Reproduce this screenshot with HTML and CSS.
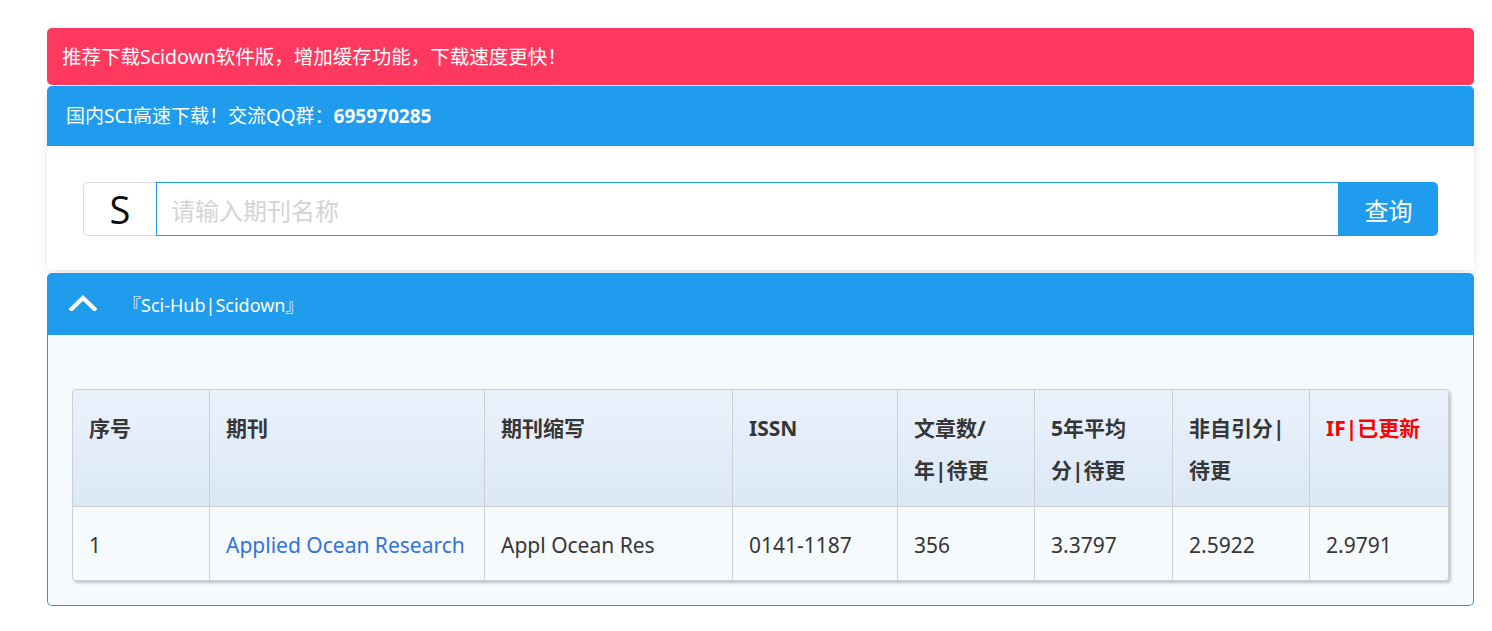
FILE: index.html
```html
<!DOCTYPE html>
<html lang="zh-CN">
<head>
<meta charset="utf-8">
<title>Scidown</title>
<link rel="stylesheet" href="styles.css">
</head>
<body>
<div class="page">
  <div class="notice">推荐下载Scidown软件版，增加缓存功能，下载速度更快！</div>
  <div class="card">
    <div class="card-head">国内SCI高速下载！交流QQ群：<strong>695970285</strong></div>
    <div class="card-body">
      <div class="search">
        <span class="addon">S</span>
        <input class="input" type="text" placeholder="请输入期刊名称">
        <button class="btn">查询</button>
      </div>
    </div>
  </div>
  <div class="panel">
    <div class="panel-head">
      <svg class="chev" width="28" height="16" viewBox="0 0 28 16"><polyline points="2.5,14 14,3 25.5,14" fill="none" stroke="#fff" stroke-width="4.2" stroke-linecap="square"/></svg>
      <span class="panel-title">『Sci-Hub|Scidown』</span>
    </div>
    <div class="panel-body">
      <table class="tbl">
        <colgroup>
          <col class="c1"><col class="c2"><col class="c3"><col class="c4"><col class="c5"><col class="c6"><col class="c7"><col class="c8">
        </colgroup>
        <thead>
          <tr>
            <th>序号</th><th>期刊</th><th>期刊缩写</th><th>ISSN</th><th>文章数/<br>年|待更</th><th>5年平均<br>分|待更</th><th>非自引分|<br>待更</th><th class="red">IF|已更新</th>
          </tr>
        </thead>
        <tbody>
          <tr>
            <td>1</td><td><a href="#">Applied Ocean Research</a></td><td>Appl Ocean Res</td><td>0141-1187</td><td>356</td><td>3.3797</td><td>2.5922</td><td>2.9791</td>
          </tr>
        </tbody>
      </table>
    </div>
  </div>
</div>
</body>
</html>
```

FILE: styles.css
```css
* { box-sizing: border-box; }
html, body { margin: 0; padding: 0; background: #fff; }
body {
  font-family: "Noto Sans", "Noto Sans CJK SC", sans-serif;
  color: #363636;
}
.page {
  padding: 28px 18px 0 47px;
}
.notice {
  background: #ff3860;
  color: #fff;
  font-size: 19.5px;
  height: 57px;
  line-height: 57px;
  padding: 0 15px;
  border-radius: 5px;
  margin-bottom: 1px;
}
.card {
  background: #fff;
  border-radius: 5px 5px 2px 2px;
  box-shadow: 0 6px 14px -2px rgba(10,10,10,0.10), 0 0 0 1px rgba(10,10,10,0.02);
}
.card-head {
  background: #209cee;
  color: #fff;
  height: 60px;
  line-height: 60px;
  padding: 0 19px;
  font-size: 19px;
  border-radius: 5px 5px 0 0;
}
.card-head strong { font-weight: 700; }
.card-body {
  padding: 36px 36px 34px;
}
.search {
  display: flex;
  height: 54px;
}
.addon {
  width: 73px;
  flex: none;
  border: 1px solid #dbdbdb;
  border-right: none;
  border-radius: 5px 0 0 5px;
  display: flex;
  align-items: center;
  justify-content: center;
  font-size: 38px;
  color: #0a0a0a;
  font-family: "Open Sans", "Noto Sans", sans-serif;
}
.input {
  flex: 1;
  min-width: 0;
  height: 54px;
  border: 1px solid #209cee;
  outline: none;
  padding: 0 14px;
  font-size: 24px;
  font-family: "Noto Sans CJK SC", sans-serif;
  color: #363636;
  margin: 0;
}
.input::placeholder { color: #d4d4d4; }
.btn {
  width: 99px;
  flex: none;
  height: 54px;
  margin: 0;
  border: none;
  background: #209cee;
  color: #fff;
  font-size: 24px;
  font-family: "Noto Sans CJK SC", sans-serif;
  border-radius: 0 5px 5px 0;
  padding: 0;
}
.panel {
  margin-top: 3px;
}
.panel-head {
  background: #209cee;
  color: #fff;
  height: 62px;
  display: flex;
  align-items: center;
  padding-left: 22px;
  border-radius: 5px 5px 0 0;
}
.chev { display: block; margin-right: 26px; margin-top: -2px; }
.panel-title { font-size: 18px; }
.panel-body {
  background: #f5fafd;
  border: 1px solid #209cee;
  border-top: none;
  border-radius: 0 0 5px 5px;
  padding: 54px 24px 24px;
}
.tbl {
  width: 100%;
  border-collapse: separate;
  border-spacing: 0;
  table-layout: fixed;
  border-radius: 4px;
  box-shadow: 2px 2px 3px rgba(0,0,0,0.22);
  font-size: 21px;
}
.c1 { width: 138px; }
.c2 { width: 275px; }
.c3 { width: 248px; }
.c4 { width: 165px; }
.c5 { width: 137px; }
.c6 { width: 138px; }
.c7 { width: 137px; }
.c8 { width: 139px; }
.tbl th, .tbl td {
  text-align: left;
  vertical-align: top;
  padding: 17px 16px 15px;
  line-height: 42px;
  border-right: 1px solid #cfcfcf;
  border-bottom: 1px solid #cfcfcf;
}
.tbl th:first-child, .tbl td:first-child { border-left: 1px solid #cfcfcf; }
.tbl th { border-top: 1px solid #cfcfcf; }
.tbl thead tr {
  background: linear-gradient(#eaf2fc, #dce8f7);
}
.tbl th {
  font-weight: 700;
  color: #363636;
  height: 118px;
}
.tbl td {
  padding: 17px 16px 14px;
  color: #363636;
  background: #f6fafd;
}
.tbl thead th:first-child { border-top-left-radius: 4px; }
.tbl thead th:last-child { border-top-right-radius: 4px; }
.tbl tbody td:first-child { border-bottom-left-radius: 4px; }
.tbl tbody td:last-child { border-bottom-right-radius: 4px; }
.tbl th.red { color: #ff0000; }
.tbl a { color: #3273dc; text-decoration: none; }
```
